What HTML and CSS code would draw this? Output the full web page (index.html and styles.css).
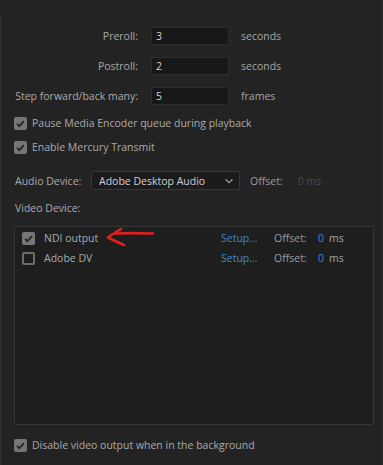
FILE: index.html
```html
<!DOCTYPE html>
<html lang="en">
<head>
  <meta charset="UTF-8">
  <title>Playback Preferences</title>
  <link rel="stylesheet" href="styles.css">
</head>
<body>
  <div class="panel">
    <!-- Pre/post roll -->
    <div class="field-row">
      <label class="field-label">Preroll:</label>
      <div class="num-input">3</div>
      <span class="unit">seconds</span>
    </div>
    <div class="field-row">
      <label class="field-label">Postroll:</label>
      <div class="num-input">2</div>
      <span class="unit">seconds</span>
    </div>
    <div class="field-row">
      <label class="field-label">Step forward/back many:</label>
      <div class="num-input">5</div>
      <span class="unit">frames</span>
    </div>

    <div class="check-row first">
      <span class="check on"><svg viewBox="0 0 13 13"><path d="M3 6.8l2.4 2.4 4.6-5"/></svg></span>
      <span>Pause Media Encoder queue during playback</span>
    </div>
    <div class="check-row">
      <span class="check on"><svg viewBox="0 0 13 13"><path d="M3 6.8l2.4 2.4 4.6-5"/></svg></span>
      <span>Enable Mercury Transmit</span>
    </div>

    <!-- Audio -->
    <div class="audio-row">
      <span class="audio-label">Audio Device:</span>
      <div class="select">
        <span>Adobe Desktop Audio</span>
        <svg class="chevron" viewBox="0 0 10 6"><path d="M1.5 1.2l3.5 3.4 3.5-3.4"/></svg>
      </div>
      <span class="offset-label">Offset:</span>
      <span class="dim">0 ms</span>
    </div>

    <!-- Video -->
    <div class="video-label">Video Device:</div>
    <div class="device-list">
      <div class="device">
        <span class="check on small"><svg viewBox="0 0 13 13"><path d="M3 6.8l2.4 2.4 4.6-5"/></svg></span>
        <span class="device-name">NDI output</span>
        <span class="setup">Setup...</span>
        <span class="offset-label">Offset:</span>
        <span class="val">0</span>
        <span class="ms">ms</span>
        <svg class="arrow" viewBox="0 0 50 20"><path d="M48 6.5C36 6 22 6 9 6.5M16 2C11 5 6 8 3 10.5C8 13 13 15.5 19 18"/></svg>
      </div>
      <div class="device">
        <span class="check off small"></span>
        <span class="device-name">Adobe DV</span>
        <span class="setup">Setup...</span>
        <span class="offset-label">Offset:</span>
        <span class="val">0</span>
        <span class="ms">ms</span>
      </div>
    </div>

    <div class="check-row bottom">
      <span class="check on"><svg viewBox="0 0 13 13"><path d="M3 6.8l2.4 2.4 4.6-5"/></svg></span>
      <span>Disable video output when in the background</span>
    </div>
  </div>
</body>
</html>
```

FILE: styles.css
```css
html, body {
  height: 100%;
}
body {
  margin: 0;
  background-color: #232323;
  color: #aaaaaa;
  font-family: 'Open Sans', 'Noto Sans', sans-serif;
  font-size: 10.5px;
  overflow: hidden;
  border-right: 1px solid #2c2c2c;
  box-sizing: border-box;
}
.panel {
  margin-top: 14px;
  height: calc(100% - 14px);
  border-left: 1px solid #333333;
  padding-top: 13px;
  box-sizing: border-box;
}
.field-row {
  display: flex;
  align-items: center;
  height: 18px;
  margin-bottom: 12px;
}
.field-label {
  width: 137px;
  text-align: right;
  margin-right: 13px;
}
.num-input {
  width: 78px;
  height: 18px;
  box-sizing: border-box;
  background-color: #171717;
  border: 1px solid #2e2e2e;
  border-radius: 2px;
  color: #d2d2d2;
  padding-left: 4px;
  line-height: 16px;
  margin-right: 12px;
}
.unit {
  color: #a6a6a6;
}
.check-row {
  display: flex;
  align-items: center;
  height: 14px;
  padding-left: 13px;
  margin-bottom: 10px;
}
.check-row.first {
  margin-top: -1px;
}
.check-row.bottom {
  margin-top: 13px;
}
.check {
  width: 13px;
  height: 13px;
  box-sizing: border-box;
  border-radius: 2px;
  margin-right: 5px;
  flex-shrink: 0;
  display: flex;
}
.check.on {
  background-color: #767676;
}
.check.off {
  border: 2px solid #6c6c6c;
}
.check svg {
  width: 13px;
  height: 13px;
}
.check path {
  fill: none;
  stroke: #262626;
  stroke-width: 1.8;
}
.audio-row {
  display: flex;
  align-items: center;
  height: 19px;
  margin-top: 17px;
  padding-left: 14px;
}
.audio-label {
  width: 76px;
}
.select {
  width: 149px;
  height: 19px;
  box-sizing: border-box;
  background-color: #1b1b1b;
  border: 1px solid #373737;
  border-radius: 2px;
  color: #d0d0d0;
  display: flex;
  align-items: center;
  padding-left: 7px;
  padding-right: 5px;
  margin-right: 10px;
}
.select span {
  flex: 1;
}
.chevron {
  width: 10px;
  height: 6px;
}
.chevron path {
  fill: none;
  stroke: #a0a0a0;
  stroke-width: 1.2;
}
.offset-label {
  color: #9c9c9c;
  margin-right: 15px;
}
.dim {
  color: #4e4e4e;
}
.video-label {
  padding-left: 14px;
  margin-top: 11px;
  height: 16px;
}
.device-list {
  margin: 9px 0 0 13px;
  width: 360px;
  height: 199px;
  box-sizing: border-box;
  background-color: #1e1e1e;
  border: 1px solid #363636;
  border-radius: 2px;
  padding-top: 1px;
}
.device {
  position: relative;
  display: flex;
  align-items: center;
  height: 20px;
  padding-left: 7px;
}
.check.small {
  margin-right: 9px;
}
.device-name {
  width: 177px;
}
.setup {
  color: #3d8ad8;
  width: 53px;
}
.device .offset-label {
  margin-right: 0;
  width: 44px;
}
.val {
  color: #3d8ad8;
  width: 11px;
}
.ms {
  color: #a6a6a6;
}
.arrow {
  position: absolute;
  left: 90px;
  top: -1px;
  width: 50px;
  height: 20px;
}
.arrow path {
  fill: none;
  stroke: #e02020;
  stroke-width: 2.6;
  stroke-linecap: round;
  stroke-linejoin: round;
}
```
